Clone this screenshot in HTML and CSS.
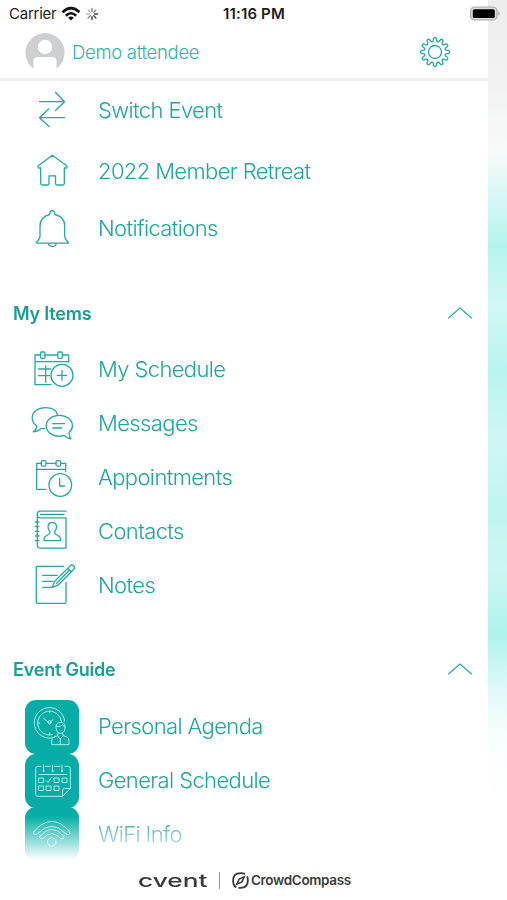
FILE: index.html
```html
<!DOCTYPE html>
<html lang="en">
<head>
	<meta charset="UTF-8">
	<title>Event menu</title>
	<link rel="stylesheet" href="styles.css">
</head>
<body>
	<div class="screen">
		<div class="status">
			<span class="carrier">Carrier</span>
			<svg class="signal" width="20" height="16" viewBox="0 0 20 16" fill="none" stroke="#111" stroke-width="2.6">
				<path d="M1.5 6.2Q10-1.8 18.5 6.2M4.8 9.7Q10 4.8 15.2 9.7"/>
				<path d="M7.2 11.8Q10 9.4 12.8 11.8L10 14.6Z" fill="#111" stroke="none"/>
			</svg>
			<svg class="loader" width="14" height="14" viewBox="0 0 14 14" fill="none" stroke-width="1.4" stroke-linecap="round">
				<path stroke="#444" d="M7 9.5V12.5M8.8 8.8L10.9 10.9M9.5 7H12.5"/>
				<path stroke="#888" d="M8.8 5.2L10.9 3.1M7 4.5V1.5M5.2 8.8L3.1 10.9"/>
				<path stroke="#bbb" d="M5.2 5.2L3.1 3.1M4.5 7H1.5"/>
			</svg>
			<span class="time">11:16 PM</span>
			<svg class="battery" width="32" height="16" viewBox="0 0 32 16">
				<rect x="1.6" y="1.1" width="26.4" height="12.8" rx="4" fill="#ddd" stroke="#b4b4b4" stroke-width="1.4"/>
				<rect x="3.8" y="3.2" width="22" height="8.8" rx="1.5" fill="#000"/>
				<path d="M29.4 5Q32 7.5 29.4 10Z" fill="#aaa"/>
			</svg>
		</div>

		<div class="drawer">
			<div class="profile">
				<svg class="avatar" width="40" height="40" viewBox="0 0 40 40">
					<path d="M6.6 35A19.6 19.6 0 1 1 33.4 35L31.5 36.5V29Q31.5 25 27 25H13Q8.5 25 8.5 29V36.5Z" fill="#cdd0d1"/>
					<circle cx="20" cy="15" r="7.2" fill="#fff"/>
				</svg>
				<span class="name">Demo attendee</span>
				<svg class="gear" width="32" height="32" viewBox="0 0 32 32">
					<path id="teeth"/>
					<circle cx="16" cy="16" r="6.5"/>
				</svg>
			</div>

			<div class="list">
				<div class="row row-switch">
					<svg class="icon" viewBox="0 0 54 54"><path d="M14.5 18.7H39.5M30.5 9.3L39.5 18.7L30.5 27.5M39.5 34.7H14.5M23.5 26L14.5 34.7L24 43.5"/></svg>
					<span class="label">Switch Event</span>
				</div>
				<div class="row row-home">
					<svg class="icon" viewBox="0 0 54 54"><path d="M27.3 11.3L13 22Q12.8 24 14 24H15.7V39.5Q15.7 41 17.2 41H22.5Q24 41 24 39.5V31.8H30.5V39.5Q30.5 41 32 41H37.8Q39.3 41 39.3 39.5V24H41Q42.4 24 42 22Z"/></svg>
					<span class="label">2022 Member Retreat</span>
				</div>
				<div class="row row-bell">
					<svg class="icon" viewBox="0 0 54 54"><path d="M24.7 12.5Q25 8.5 27.3 8.5T30 12.5Q39.7 15 39.7 24V34Q39.7 37 43.5 40.5Q43 41.2 42 41.2H12.5Q11.4 41.2 11 40.5Q15 37 15 34V24Q15 15 24.7 12.5M23.3 41.5Q23.8 44.5 27.3 44.5T31.3 41.5"/></svg>
					<span class="label">Notifications</span>
				</div>

				<div class="section">
					<span>My Items</span>
					<svg class="chevron" width="26" height="14" viewBox="0 0 26 14"><path d="M1.5 12L13 2L24.5 12"/></svg>
				</div>
				<div class="row">
					<svg class="icon" viewBox="0 0 54 54"><path d="M26 41.7H10V12H15.5M20 12H32.8M37.3 12H43.7V19M10 18.7H43.7M13.3 26H25.5M13.3 32.7H24.5M20.7 22.7V39.3M37 27.5V37.2M32.2 32.3H41.8"/><rect x="15.5" y="9" width="4.5" height="6.3" rx="1"/><rect x="32.8" y="9" width="4.5" height="6.3" rx="1"/><circle cx="37" cy="32.3" r="11"/></svg>
					<span class="label">My Schedule</span>
				</div>
				<div class="row">
					<svg class="icon" viewBox="0 0 54 54"><path d="M32.5 17.5C31 13 26 10.7 20.5 10.7C13 10.7 7.2 14.8 7.2 20.7C7.2 24.3 9.2 27 11.7 28.7Q12 32 8.3 34.8Q13 34.7 16.2 31.4Q17.5 31.8 19.5 31.6"/><path d="M44 35.6C46 33.8 47.4 31.4 47.4 28.7C47.4 22.8 41.5 18.3 34.3 18.3S21.2 22.8 21.2 28.7S27.1 39.2 34.3 39.2Q37 39.2 39.2 38.4Q42 41.6 46 41.8Q44 39.5 44 35.6ZM27.7 26.7H39.7M27.7 31H36.7"/></svg>
					<span class="label">Messages</span>
				</div>
				<div class="row">
					<svg class="icon" viewBox="0 0 54 54"><path d="M20.7 38.3H11.7V12.3H16.3M21 12.3H31M35.7 12.3H40.7V20.5M11.7 18.3H40.7M34.7 27.3V35H39.5"/><rect x="16.3" y="9.6" width="4.7" height="5.6" rx="1.5"/><rect x="31" y="9.6" width="4.7" height="5.6" rx="1.5"/><circle cx="35.3" cy="34" r="11.3"/></svg>
					<span class="label">Appointments</span>
				</div>
				<div class="row">
					<svg class="icon" viewBox="0 0 54 54"><path d="M41 7.2H15Q12.3 7.2 12.3 10.5V41Q12.3 44.2 15.5 44.2H41V13.8H15Q12.3 13.8 12.3 10.5M15.5 10.5H39"/><path d="M10.3 18H14M10.3 22.6H14M10.3 27.3H14M10.3 32H14M10.3 36.7H14"/><path d="M27.3 18.5C23.8 18.5 22.4 21.3 23.3 24.5C23.8 26.5 25.2 27.5 25 29C24.8 31 19.2 31.2 19.2 34.5V36.7H35.4V34.5C35.4 31.2 29.8 31 29.6 29C29.4 27.5 30.8 26.5 31.3 24.5C32.2 21.3 30.8 18.5 27.3 18.5Z"/></svg>
					<span class="label">Contacts</span>
				</div>
				<div class="row">
					<svg class="icon" viewBox="0 0 54 54"><path d="M38.7 8.3H12.3Q11.3 8.3 11.3 9.3V44.3Q11.3 45.3 12.3 45.3H40Q41 45.3 41 44.3V24.3M17.7 17.3H32.3M17.7 23.3H28M17.7 29.3H27"/><path d="M27.3 29.3L29.5 23.5L45.5 7.6Q47 6.3 48.7 8Q50.3 9.7 49 11L33 27.2ZM42.8 10.3L46.5 13.8M31.5 25.5L44.5 12.3"/></svg>
					<span class="label">Notes</span>
				</div>

				<div class="section section-guide">
					<span>Event Guide</span>
					<svg class="chevron" width="26" height="14" viewBox="0 0 26 14"><path d="M1.5 12L13 2L24.5 12"/></svg>
				</div>
				<div class="row">
					<svg class="icon tile" viewBox="0 0 54 54"><path d="M29.5 37.4A15.3 15.3 0 1 1 39.8 21.2M27.5 34.7A12 12 0 1 1 36.5 21.5M18.3 18.3L24.7 23L28 19.5M24.7 11V13M12.7 23H14.7M24.7 33V35"/><circle cx="24.7" cy="22.3" r="1.7"/><path d="M31 26.5Q31 22.5 35.5 22.5T40 26.5V28Q39.5 33.3 35.5 33.3T31 28ZM31 26.5Q36 27 37.5 25L40 27M33 32.7V35.5L28.5 37Q26.7 38 26.7 41V44.7H44V41Q44 38 42 37L37.8 35.5V32.7M32.5 35.7L35.3 39L38.2 35.7M35.3 39V44.7"/></svg>
					<span class="label">Personal Agenda</span>
				</div>
				<div class="row">
					<svg class="icon tile" viewBox="0 0 54 54"><path d="M16 12.3H12.7Q10.7 12.3 10.7 14.3V40.3Q10.7 42.3 12.7 42.3H37.5L45.3 34.5V14.3Q45.3 12.3 43.3 12.3H40M20.5 12.3H25.2M29.5 12.3H35M14 20.5H42M37.5 42.3V36.5Q37.5 34.5 39.5 34.5H45.3M18.5 11V16.5M27.5 11V16.5M37 11V16.5M21 26.5L23 28.5L26.5 23.5"/><path d="M14 24H18.5V28.5H14ZM29.5 24H34V28.5H29.5ZM37.5 24H42V28.5H37.5ZM14 32H18.5V36.5H14ZM21.5 32H26V36.5H21.5ZM29.5 32H34V36.5H29.5Z"/><circle cx="18.5" cy="17" r=".7"/><circle cx="27.5" cy="17" r=".7"/><circle cx="37" cy="17" r=".7"/></svg>
					<span class="label">General Schedule</span>
				</div>
				<div class="row">
					<svg class="icon tile" viewBox="0 0 54 54"><path d="M9.2 24.2Q26.7 4.5 44.3 24.2Q46 26.5 43.5 27.8Q42 28 40.8 26.7Q26.7 11.8 12.5 26.7Q11 28 9.5 27.4Q7.5 26 9.2 24.2ZM15 29Q26.7 15.7 38.5 29Q39.5 31 37.8 32Q36.3 32.3 35 31Q26.7 22.5 18.3 31Q17 32.3 15.5 31.8Q14 30.5 15 29Z"/><circle cx="26.7" cy="35" r="4.2"/></svg>
					<span class="label">WiFi Info</span>
				</div>
			</div>

			<div class="footer">
				<span class="cvent">cvent</span>
				<span class="divider"></span>
				<svg class="compass" width="17" height="17" viewBox="0 0 18 18" fill="none" stroke="#3b3b3d" stroke-width="2">
					<path d="M4.6 16.2Q1.2 15 1.2 9Q1.2 1.2 9 1.2Q12 1.2 13.8 2M16 4.6Q16.8 6.4 16.8 9Q16.8 16.8 9 16.8Q7.8 16.8 6.8 16.7"/>
					<path d="M13 5L10.5 10.5L5 13L7.5 7.5Z" stroke-width="1.6"/>
				</svg>
				<span class="crowd">CrowdCompass</span>
			</div>
		</div>
	</div>

	<script type="text/javascript" src="gear.js"></script>
</body>
</html>
```
FILE: styles.css
```css
* {
    box-sizing: border-box;
    margin: 0;
    padding: 0;
}

body {
    background: #fff;
    font-family: Inter, "Liberation Sans", sans-serif;
}

.screen {
    position: relative;
    width: 507px;
    height: 900px;
    overflow: hidden;
    background: linear-gradient(#ededed 0, #f3f3f3 90px, #f8fafa 150px, #d9f8f5 195px, #b5f4ee 245px, #d2f7f6 305px, #b8f4ef 370px, #d0f6f6 440px, #c0f5f1 510px, #cdf6f4 570px, #aef3ec 635px, #dcf9f7 685px, #f8fefe 735px, #fff 800px);
}

.status {
    position: absolute;
    z-index: 2;
    top: 0;
    left: 0;
    width: 507px;
    height: 27px;
    padding: 0 6px 0 9px;
    display: flex;
    align-items: center;
    color: #1c1c1c;
    font-size: 15px;
}

.carrier {
    width: 52px;
    letter-spacing: -0.25px;
}

.loader {
    margin-left: 4px;
}

.time {
    margin-left: 124px;
    font-size: 15px;
    font-weight: 600;
    letter-spacing: 0.15px;
    white-space: nowrap;
}

.battery {
    margin-left: auto;
}

.drawer {
    width: 488px;
    height: 900px;
    padding-top: 27px;
    background: #fff;
    display: flex;
    flex-direction: column;
}

.profile {
    height: 54px;
    padding: 0 37px 2px 25px;
    border-bottom: 3px solid #f0f1f1;
    display: flex;
    align-items: center;
    flex-shrink: 0;
}

.name {
    margin-left: 7px;
    font-size: 18.5px;
    font-weight: 300;
    letter-spacing: -0.3px;
    color: #2cb5a8;
}

.gear {
    margin-left: auto;
}

.gear,
.icon,
.chevron {
    fill: none;
    stroke: #25a99f;
    stroke-width: 1.3;
    stroke-linejoin: round;
    stroke-linecap: round;
}

.chevron {
    stroke-width: 1.1;
}

.list {
    height: 781px;
    overflow: hidden;
    flex-shrink: 0;
    -webkit-mask-image: linear-gradient(#000 735px, transparent 779px);
    mask-image: linear-gradient(#000 735px, transparent 779px);
}

.row {
    height: 53.8px;
    padding-left: 25px;
    display: flex;
    align-items: center;
}

.row-switch {
    height: 58px;
}

.row-home {
    height: 64px;
}

.row-bell {
    height: 51px;
}

.icon {
    width: 54px;
    height: 54px;
    flex-shrink: 0;
}

.tile {
    border-radius: 11px;
    background: #06ada6;
    stroke: #a9f0e6;
    stroke-width: 1;
}

.label {
    margin-left: 19px;
    padding-bottom: 1px;
    font-size: 22px;
    font-weight: 300;
    letter-spacing: -0.62px;
    color: #20a79c;
    white-space: nowrap;
}

.section {
    height: 89px;
    padding: 29px 15px 0 13px;
    display: flex;
    justify-content: space-between;
    align-items: center;
    font-size: 18px;
    font-weight: 600;
    letter-spacing: -0.2px;
    color: #159f95;
}

.section-guide {
    height: 88px;
    padding-top: 27px;
}

.footer {
    height: 38px;
    padding: 0 0 2px 138px;
    display: flex;
    align-items: center;
    color: #3b3b3d;
}

.cvent {
    width: 69px;
    font-size: 18px;
    font-weight: 500;
    transform: scaleX(1.46);
    transform-origin: left center;
}

.divider {
    width: 1px;
    height: 17px;
    margin: 0 12px;
    background: #999;
}

.crowd {
    margin-left: 2px;
    font-size: 13.5px;
    font-weight: 600;
    letter-spacing: -0.35px;
}
```
FILE: gear.js
```javascript
// outline of the settings gear: 12 rounded teeth
var d = '';
for (var i = 0; i < 120; i++) {
	var a = i * Math.PI / 60;
	var w = Math.cos(a * 12);
	// flatten the wave at both ends
	var r = 12.5 + 2 * Math.tanh(w * 2.2);
	d += (i ? 'L' : 'M') + (16 + r * Math.sin(a)).toFixed(2) + ' ' + (16 - r * Math.cos(a)).toFixed(2);
}
document.getElementById('teeth').setAttribute('d', d + 'Z');
```
